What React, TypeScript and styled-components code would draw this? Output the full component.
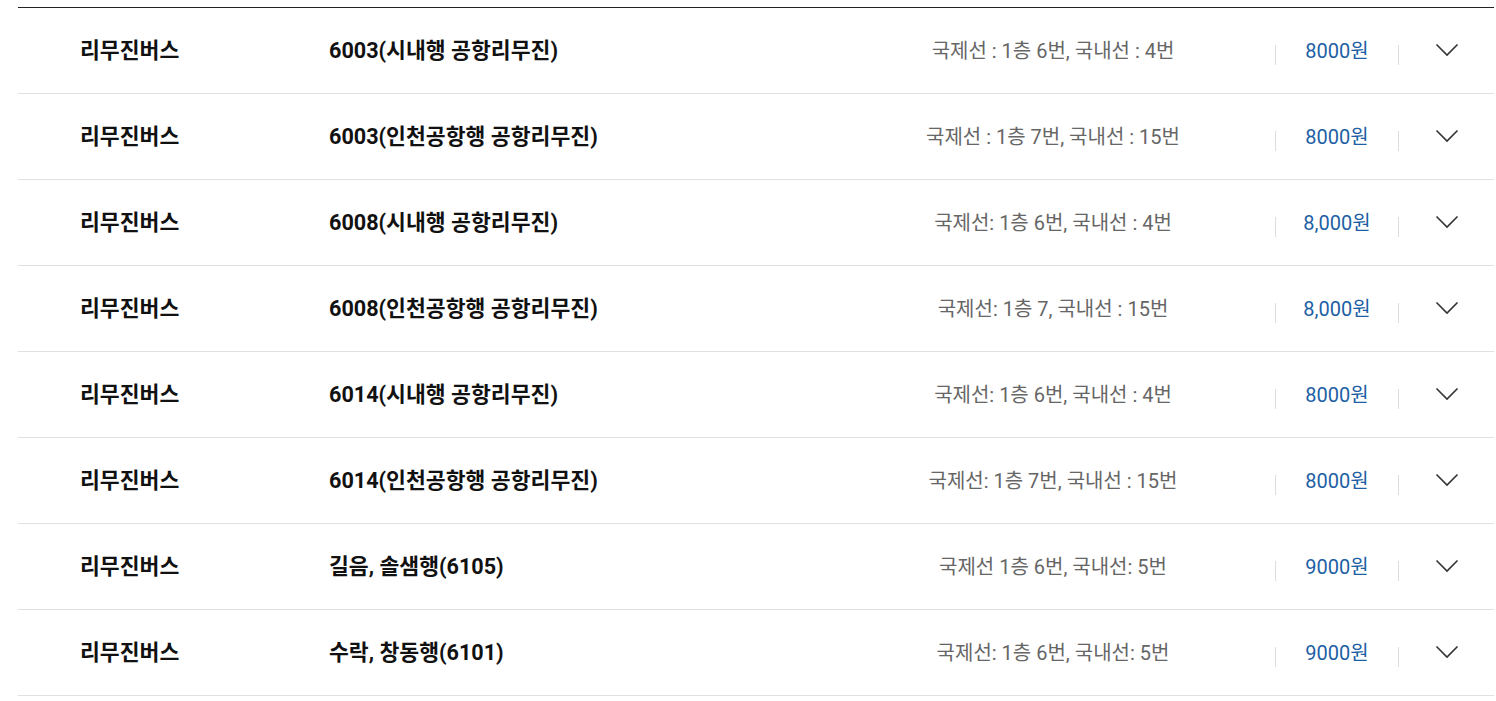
import React from 'react';
import styled, { createGlobalStyle } from 'styled-components';

const GlobalStyle = createGlobalStyle`
  html, body {
    margin: 0;
    padding: 0;
    background: #fff;
  }
  body {
    font-family: Roboto, 'Noto Sans CJK KR', sans-serif;
    color: #111;
  }
`;

const List = styled.ul`
  list-style: none;
  margin: 7px 2px 0 18px;
  padding: 0;
  border-top: 1px solid #222;
`;

const Row = styled.li`
  display: grid;
  grid-template-columns: 249px 502px 444px 124px 95px;
  align-items: center;
  height: 85px;
  padding-left: 62px;
  border-bottom: 1px solid #e0e0e0;
`;

const Kind = styled.span`
  font-size: 21.6px;
  font-weight: 700;
  color: #111;
  margin-bottom: 4px;
`;

const Route = styled.span`
  font-size: 21.6px;
  font-weight: 700;
  color: #111;
  white-space: nowrap;
  margin-bottom: 4px;
`;

const Info = styled.span`
  font-size: 20px;
  color: #666;
  text-align: center;
  white-space: nowrap;
  margin-bottom: 2px;
`;

const Price = styled.span`
  position: relative;
  font-size: 20px;
  color: #1d5fa5;
  text-align: center;
  white-space: nowrap;
  margin-bottom: 2px;

  &::before,
  &::after {
    content: '';
    position: absolute;
    top: 50%;
    margin-top: -5px;
    width: 1px;
    height: 20px;
    background: #ddd;
  }
  &::before {
    left: 0;
  }
  &::after {
    right: 0;
  }
`;

const Toggle = styled.button`
  display: flex;
  justify-content: center;
  align-items: center;
  background: none;
  border: none;
  padding: 0;
  height: 24px;
  margin-bottom: 2px;
  cursor: pointer;
`;

const Chevron = () => (
  <svg width="24" height="14" viewBox="0 0 24 14" fill="none">
    <path d="M1.5 1.5 L12 12 L22.5 1.5" stroke="#333" strokeWidth="1.6" />
  </svg>
);

const rows = [
  { route: '6003(시내행 공항리무진)', info: '국제선 : 1층 6번, 국내선 : 4번', price: '8000원' },
  { route: '6003(인천공항행 공항리무진)', info: '국제선 : 1층 7번, 국내선 : 15번', price: '8000원' },
  { route: '6008(시내행 공항리무진)', info: '국제선: 1층 6번, 국내선 : 4번', price: '8,000원' },
  { route: '6008(인천공항행 공항리무진)', info: '국제선: 1층 7, 국내선 : 15번', price: '8,000원' },
  { route: '6014(시내행 공항리무진)', info: '국제선: 1층 6번, 국내선 : 4번', price: '8000원' },
  { route: '6014(인천공항행 공항리무진)', info: '국제선: 1층 7번, 국내선 : 15번', price: '8000원' },
  { route: '길음, 솔샘행(6105)', info: '국제선 1층 6번, 국내선: 5번', price: '9000원' },
  { route: '수락, 창동행(6101)', info: '국제선: 1층 6번, 국내선: 5번', price: '9000원' },
];

export default function App() {
  return (
    <>
      <GlobalStyle />
      <List>
        {rows.map((r, i) => (
          <Row key={i}>
            <Kind>리무진버스</Kind>
            <Route>{r.route}</Route>
            <Info>{r.info}</Info>
            <Price>{r.price}</Price>
            <Toggle aria-label="펼치기">
              <Chevron />
            </Toggle>
          </Row>
        ))}
      </List>
    </>
  );
}
